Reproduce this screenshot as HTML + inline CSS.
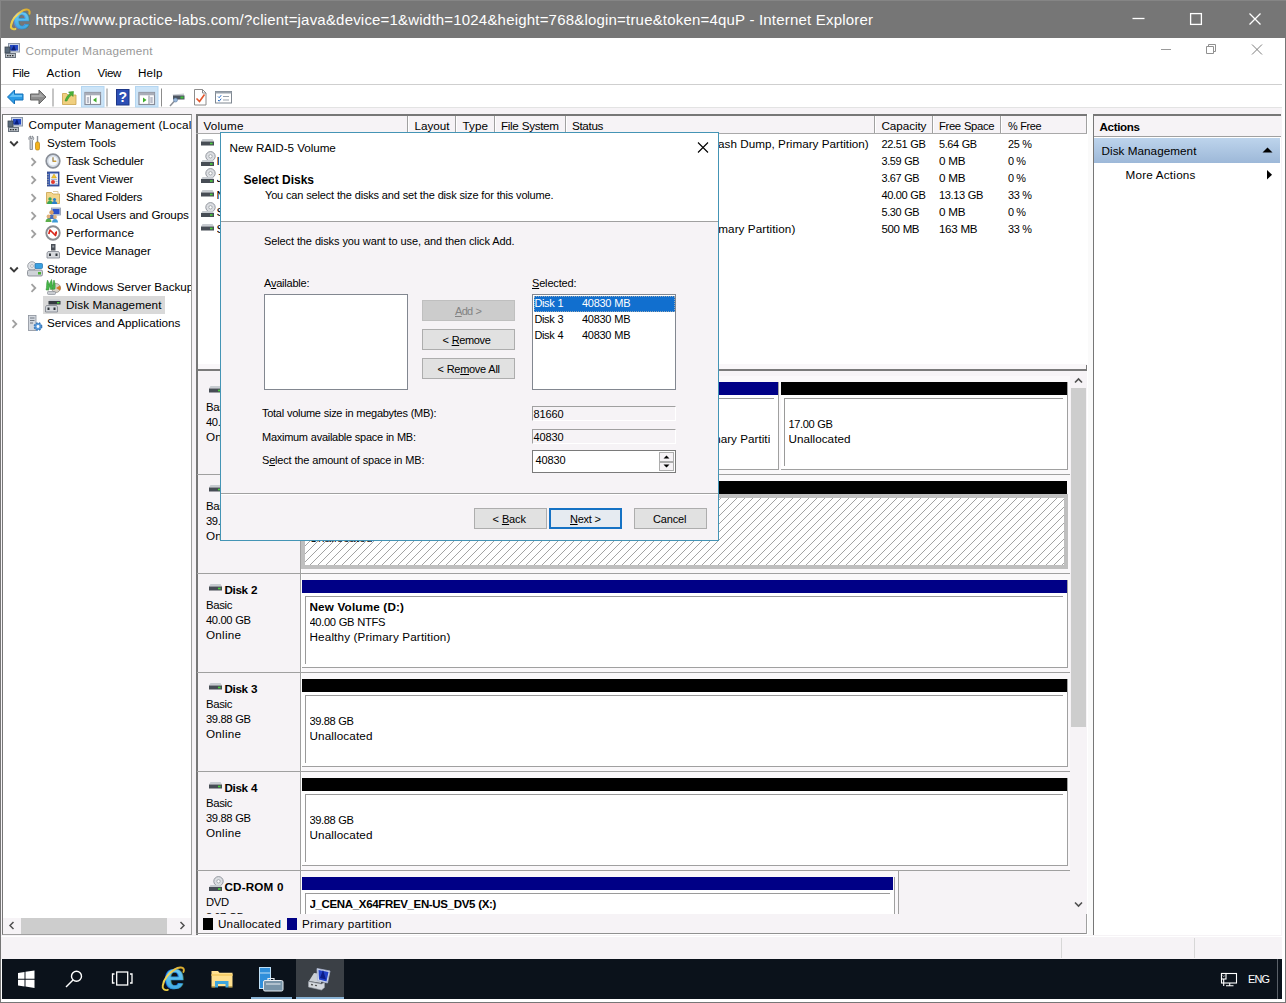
<!DOCTYPE html><html lang="en"><head><meta charset="utf-8"><title>Computer Management - New RAID-5 Volume</title>
<style>html,body{margin:0;padding:0}body{width:1286px;height:1003px;position:relative;overflow:hidden;background:#fff;font-family:"Liberation Sans", sans-serif;font-size:12px}div,span.t,svg{position:absolute}span.t{white-space:pre}u{text-decoration-thickness:1px;text-underline-offset:1px}svg{overflow:visible}</style></head><body>
<div style="left:0px;top:0px;width:1286px;height:1003px;background:#fff;"></div>
<div style="left:0px;top:0px;width:1286px;height:37.5px;background:#767676;"></div>
<div style="left:0px;top:37px;width:1px;height:966px;background:#767676;"></div>
<div style="left:0px;top:0px;width:1286px;height:1px;background:#858585;"></div>
<div style="left:0px;top:0px;width:1px;height:38px;background:#858585;"></div>
<div style="left:1285px;top:37px;width:1px;height:966px;background:#767676;"></div>
<div style="left:0px;top:1002px;width:1286px;height:1px;background:#767676;"></div>
<svg style="left:8px;top:6px" width="24" height="24" viewBox="0 0 24 24"><defs><linearGradient id="ieg8" x1="0" y1="0" x2="0" y2="1"><stop offset="0" stop-color="#86d3f6"/><stop offset=".55" stop-color="#58bdee"/><stop offset="1" stop-color="#2f97d8"/></linearGradient><linearGradient id="ier8" x1="0" y1="1" x2="1" y2="0"><stop offset="0" stop-color="#e7c83c"/><stop offset=".5" stop-color="#f3d864"/><stop offset="1" stop-color="#d9a92a"/></linearGradient></defs><text x="13.700" y="22.900" text-anchor="middle" font-family="Liberation Sans, sans-serif" font-weight="bold" font-size="30.500" fill="url(#ieg8)" stroke="#2a8fd2" stroke-width=".5">e</text><path d="M7.400 22.900C5 23.800 2.200 22.500 3 19.300 3.800 14.800 7.800 8.600 15 4.400 17.500 3.200 21 3 21.500 5.200 21.700 6.200 21.600 7 21.500 7.600" stroke="url(#ier8)" stroke-width="2.1" fill="none" stroke-linecap="round"/></svg>
<span class="t" style="left:35.5px;top:11.80px;font-size:15px;line-height:16px;color:#fff;letter-spacing:0.195px;">https://www.practice-labs.com/?client=java&amp;device=1&amp;width=1024&amp;height=768&amp;login=true&amp;token=4quP - Internet Explorer</span>
<svg style="left:1130px;top:8px" width="150" height="24" viewBox="0 0 150 24"><path d="M2.5 10.5h12" stroke="#fff" stroke-width="1.3" fill="none"/><rect x="60.6" y="5.6" width="10.8" height="10.8" stroke="#fff" stroke-width="1.3" fill="none"/><path d="M119.5 5.5l11 11M130.500 5.5l-11 11" stroke="#fff" stroke-width="1.3" fill="none"/></svg>
<div style="left:1px;top:108px;width:1281px;height:851px;background:#f6f3f6;"></div>
<svg style="left:4px;top:42px" width="17" height="17" viewBox="0 0 17 17"><rect x="4.500" y="1.500" width="11" height="8.500" fill="#c9d3e6" stroke="#8c97a8"/><rect x="6" y="3" width="8" height="5.500" fill="#2348c4"/><path d="M7 8.500l3-5.500 2 5.500z" fill="#0a1f7a"/><rect x="1" y="5" width="5" height="6" fill="#5a6a7a" stroke="#3c4650" stroke-width=".8"/><rect x="1.500" y="11.500" width="10" height="4" fill="#b9c0c8" stroke="#6a737d"/><rect x="3" y="13" width="1.500" height="1.300" fill="#333"/><rect x="5.500" y="13" width="1.500" height="1.300" fill="#333"/><rect x="8" y="13" width="1.500" height="1.300" fill="#333"/></svg>
<span class="t" style="left:25.6px;top:42.80px;font-size:11.7px;line-height:16px;color:#999;letter-spacing:0.232px;">Computer Management</span>
<svg style="left:1160px;top:40px" width="110" height="20" viewBox="0 0 110 20"><path d="M1 9.500h10" stroke="#9a9a9a" stroke-width="1" fill="none"/><path d="M46.500 6.500h7v7h-7zM48.500 6.500v-2h7v7h-2" stroke="#909090" stroke-width="1" fill="none"/><path d="M92 4.500l10 10M102 4.500l-10 10" stroke="#7d7d7d" stroke-width="1" fill="none"/></svg>
<span class="t" style="left:12.3px;top:65.20px;font-size:11.6px;line-height:16px;color:#000;letter-spacing:-0.333px;">File</span>
<span class="t" style="left:46.5px;top:65.20px;font-size:11.7px;line-height:16px;color:#000;letter-spacing:0.295px;">Action</span>
<span class="t" style="left:97.5px;top:65.20px;font-size:11.6px;line-height:16px;color:#000;letter-spacing:-0.312px;">View</span>
<span class="t" style="left:138px;top:65.20px;font-size:11.7px;line-height:16px;color:#000;letter-spacing:0.143px;">Help</span>
<div style="left:1px;top:84px;width:1281px;height:1px;background:#cfcfcf;"></div>
<div style="left:1px;top:107px;width:1281px;height:1px;background:#e3e3e3;"></div>
<svg style="left:1px;top:85px" width="240" height="23" viewBox="0 0 240 23"><path d="M6.500 12l7-7v4h8.500v6h-8.500v4z" fill="#2b9be6" stroke="#1470b8" stroke-width="1" stroke-linejoin="round"/><path d="M8.500 12l4.500-4.500v2.500h8v2z" fill="#7fd0fb" opacity=".7"/><path d="M45 12l-7-7v4h-8.500v6h8.500v4z" fill="#8d8d8d" stroke="#666" stroke-width="1" stroke-linejoin="round"/><path d="M43 12l-4.500-4.500v2.500h-8v2z" fill="#b5b5b5" opacity=".7"/><rect x="51.5" y="3.500" width="1" height="18" fill="#8c8c8c"/><rect x="105.5" y="3.500" width="1" height="18" fill="#8c8c8c"/><rect x="160" y="3.500" width="1" height="18" fill="#8c8c8c"/><path d="M61.500 8.500h4l1.500 1.500h8v9.500h-13.500z" fill="#f0cf7f" stroke="#c9a24b" stroke-width=".8"/><path d="M64 16c1-4 3-6 5-7.500l-1.500-1.500 5-.5-.5 5-1.500-1.500c-2 1.500-3.500 3.500-4.500 6z" fill="#4db33a" stroke="#2d8a23" stroke-width=".5"/><rect x="80.5" y="1.500" width="22.500" height="20.500" fill="#cce4f7" stroke="#b3d6f2" stroke-width="1"/><rect x="134.5" y="1.500" width="22.500" height="20.500" fill="#cce4f7" stroke="#b3d6f2" stroke-width="1"/><rect x="84" y="7.500" width="15.500" height="12" fill="#fff" stroke="#878c99" stroke-width="1.200"/><rect x="84" y="7.500" width="15.500" height="2.800" fill="#a9adb8"/><rect x="85.5" y="11.800" width="3" height="6.500" fill="#dfe2ea"/><path d="M89.5 10.500v9" stroke="#878c99" stroke-width="1"/><path d="M86 13h2M86 15h2M86 17h2" stroke="#878c99" stroke-width=".8"/><path d="M95.5 12.500v5l-3.500-2.500z" fill="#3fae2a"/><rect x="138" y="7.500" width="15.500" height="12" fill="#fff" stroke="#878c99" stroke-width="1.200"/><rect x="138" y="7.500" width="15.500" height="2.800" fill="#a9adb8"/><rect x="149" y="11.800" width="3" height="6.500" fill="#dfe2ea"/><path d="M148 10.500v9" stroke="#878c99" stroke-width="1"/><path d="M149.5 13h2M149.5 15h2M149.5 17h2" stroke="#878c99" stroke-width=".8"/><path d="M142 12.500v5l3.500-2.500z" fill="#3fae2a"/><rect x="115.500" y="4.500" width="12.500" height="15.500" fill="#2d4fb5" stroke="#1d3787" stroke-width="1"/><text x="121.800" y="17.300" text-anchor="middle" font-family="Liberation Sans, sans-serif" font-weight="bold" font-size="14" fill="#fff">?</text><path d="M169 21l4.500-5" stroke="#8a8f98" stroke-width="1.500"/><path d="M171.500 9.500l11.500-1v4.500l-9.500 2z" fill="#c9cdd3"/><rect x="172" y="10.500" width="11.500" height="4" fill="#4c5560"/><rect x="179.500" y="11.500" width="3" height="2" fill="#3ec43a"/><circle cx="174.500" cy="15" r="2" fill="#9ab7d9" stroke="#5c7fa8" stroke-width=".6"/><path d="M193.500 4.500h8l3.500 3.500v12h-11.500z" fill="#fff" stroke="#8c8c8c" stroke-width="1"/><path d="M201.500 4.500v3.500h3.500" fill="none" stroke="#8c8c8c" stroke-width="1"/><path d="M195.500 13.500l3 3 5-7" fill="none" stroke="#e3562b" stroke-width="1.600"/><rect x="214.500" y="6.500" width="16" height="11.500" fill="#fff" stroke="#7f8791" stroke-width="1"/><rect x="214.500" y="6.500" width="16" height="2" fill="#9aa3ad"/><path d="M217 11.500l1.200 1.200 2-2.500M217 15l1.200 1.200 2-2.500" fill="none" stroke="#2a6fc9" stroke-width="1"/><path d="M222 11.500h6M222 15h6" stroke="#9aa3ad" stroke-width="1"/></svg>
<div style="left:2px;top:114px;width:190px;height:821px;background:#fff;border:1px solid #a0a0a0;box-sizing:border-box;border-top-color:#777;border-left-color:#777;"></div>
<div style="left:4px;top:115px;width:187px;height:802px;overflow:hidden">
<svg style="left:3px;top:1.0999999999999943px" width="17" height="17" viewBox="0 0 17 17"><rect x="4.500" y="1.500" width="11" height="8.500" fill="#c9d3e6" stroke="#8c97a8"/><rect x="6" y="3" width="8" height="5.500" fill="#2348c4"/><path d="M7 8.500l3-5.500 2 5.500z" fill="#0a1f7a"/><rect x="1" y="5" width="5" height="6" fill="#5a6a7a" stroke="#3c4650" stroke-width=".8"/><rect x="1.500" y="11.500" width="10" height="4" fill="#b9c0c8" stroke="#6a737d"/><rect x="3" y="13" width="1.500" height="1.300" fill="#333"/><rect x="5.500" y="13" width="1.500" height="1.300" fill="#333"/><rect x="8" y="13" width="1.500" height="1.300" fill="#333"/></svg>
<span class="t" style="left:24.5px;top:1.60px;font-size:11.7px;line-height:16px;color:#000;letter-spacing:0.198px;white-space:nowrap;">Computer Management (Local)</span>
<svg style="left:23px;top:19.599999999999994px" width="16" height="16" viewBox="0 0 16 16"><path d="M3.500 1c-1.500.5-2 2-1.500 3.500l1 1v9h2.500v-9l1-1c.5-1.500 0-3-1.500-3.500v2.500h-1.500z" fill="#c9ccd1" stroke="#6f747b" stroke-width=".7"/><rect x="9.800" y="1" width="1.400" height="6" fill="#8c9097"/><rect x="8.500" y="7" width="4" height="8" rx="1.500" fill="#f3b21b" stroke="#b9810c" stroke-width=".7"/></svg>
<svg style="left:5.199999999999999px;top:24.799999999999994px" width="10" height="8" viewBox="0 0 10 8"><path d="M1.200 1.500l3.800 3.800 3.800-3.800" stroke="#3a3a3a" stroke-width="1.900" fill="none"/></svg>
<span class="t" style="left:43px;top:19.60px;font-size:11.7px;line-height:16px;color:#000;letter-spacing:-0.036px;word-spacing:0.036px;white-space:nowrap;">System Tools</span>
<svg style="left:41px;top:37.599999999999994px" width="16" height="16" viewBox="0 0 16 16"><circle cx="8" cy="8" r="6.800" fill="#dfe8f3" stroke="#8a8f98" stroke-width="1.700"/><circle cx="8" cy="8" r="5" fill="#f4f8fc" stroke="#c2c9d3" stroke-width=".6"/><path d="M8 4.300v4h3.200" fill="none" stroke="#8a6a2a" stroke-width="1.100"/><path d="M8.300 8.300h2.900" fill="none" stroke="#d8a530" stroke-width="1.100"/></svg>
<svg style="left:25.700000000000003px;top:42.199999999999996px" width="7" height="11" viewBox="0 0 7 11"><path d="M1.500 1.200l3.800 3.800-3.800 3.800" stroke="#a0a0a0" stroke-width="1.800" fill="none"/></svg>
<span class="t" style="left:62px;top:37.60px;font-size:11.7px;line-height:16px;color:#000;letter-spacing:-0.166px;word-spacing:0.166px;white-space:nowrap;">Task Scheduler</span>
<svg style="left:41px;top:55.599999999999994px" width="16" height="16" viewBox="0 0 16 16"><rect x="2.500" y="1" width="11.500" height="14" fill="#3e5fb3" stroke="#263f85" stroke-width=".8"/><rect x="5" y="2.500" width="8" height="11" fill="#eef1f7"/><path d="M2 3.500h2M2 6h2M2 8.500h2M2 11h2M2 13.500h2" stroke="#9aa0aa" stroke-width=".8"/><path d="M9 3l2.500 4h-5z" fill="#f4c52a" stroke="#b98d10" stroke-width=".4"/><circle cx="8" cy="11" r="2" fill="#e2392d"/><path d="M6 8.500h6M10.500 10.500h2M10.500 12.500h2" stroke="#7d8bb5" stroke-width=".6"/></svg>
<svg style="left:25.700000000000003px;top:60.199999999999996px" width="7" height="11" viewBox="0 0 7 11"><path d="M1.500 1.200l3.800 3.800-3.800 3.800" stroke="#a0a0a0" stroke-width="1.800" fill="none"/></svg>
<span class="t" style="left:62px;top:55.60px;font-size:11.7px;line-height:16px;color:#000;letter-spacing:-0.122px;word-spacing:0.122px;white-space:nowrap;">Event Viewer</span>
<svg style="left:41px;top:73.6px" width="16" height="16" viewBox="0 0 16 16"><path d="M1.500 3.500h5l1.500 1.500h6.500v9.500h-13z" fill="#f3d58b" stroke="#c9a24b" stroke-width=".8"/><path d="M8 2.500h5v2.500" fill="none" stroke="#d8c8a0" stroke-width="1"/><circle cx="5" cy="10" r="1.700" fill="#3aa657"/><path d="M2 15c0-2.500 1.500-3.300 3-3.300s3 .8 3 3.300z" fill="#3aa657"/><circle cx="9.500" cy="10.500" r="1.600" fill="#2a7fc9"/><path d="M6.800 15c0-2.300 1.300-3 2.700-3s2.700.7 2.700 3z" fill="#2a7fc9"/></svg>
<svg style="left:25.700000000000003px;top:78.19999999999999px" width="7" height="11" viewBox="0 0 7 11"><path d="M1.500 1.200l3.800 3.800-3.800 3.800" stroke="#a0a0a0" stroke-width="1.800" fill="none"/></svg>
<span class="t" style="left:62px;top:73.60px;font-size:11.7px;line-height:16px;color:#000;letter-spacing:-0.291px;word-spacing:0.291px;white-space:nowrap;">Shared Folders</span>
<svg style="left:41px;top:91.6px" width="16" height="16" viewBox="0 0 16 16"><rect x="6.500" y="1" width="9" height="7" fill="#c9d3e6" stroke="#8c97a8" stroke-width=".8"/><rect x="7.500" y="2" width="7" height="5" fill="#2d52c8"/><circle cx="6.500" cy="5.500" r="2.200" fill="#d9a066"/><path d="M2.500 12c0-3 2-4.200 4-4.200s4 1.200 4 4.200z" fill="#4a6fb8"/><circle cx="3.500" cy="9.500" r="1.900" fill="#e0b27c"/><path d="M.5 15c0-2.500 1.500-3.500 3-3.500s3 1 3 3.500z" fill="#5cae4a"/><circle cx="10" cy="10" r="1.900" fill="#e0b27c"/><path d="M7 15.500c0-2.500 1.500-3.500 3-3.500s3 1 3 3.500z" fill="#3f9bd8"/></svg>
<svg style="left:25.700000000000003px;top:96.19999999999999px" width="7" height="11" viewBox="0 0 7 11"><path d="M1.500 1.200l3.800 3.800-3.800 3.800" stroke="#a0a0a0" stroke-width="1.800" fill="none"/></svg>
<span class="t" style="left:62px;top:91.60px;font-size:11.7px;line-height:16px;color:#000;letter-spacing:-0.176px;word-spacing:0.176px;white-space:nowrap;">Local Users and Groups</span>
<svg style="left:41px;top:109.6px" width="16" height="16" viewBox="0 0 16 16"><circle cx="8" cy="8" r="6.700" fill="#fff" stroke="#8a8d92" stroke-width="1.900"/><path d="M3.800 9l1.200-4 5.500 5.500.8-3.500" fill="none" stroke="#d8271c" stroke-width="1.700" stroke-linejoin="round"/><path d="M11.800 5.800l.3 3.200-2.600-1z" fill="#d8271c"/></svg>
<svg style="left:25.700000000000003px;top:114.19999999999999px" width="7" height="11" viewBox="0 0 7 11"><path d="M1.500 1.200l3.800 3.800-3.800 3.800" stroke="#a0a0a0" stroke-width="1.800" fill="none"/></svg>
<span class="t" style="left:62px;top:109.60px;font-size:11.7px;line-height:16px;color:#000;letter-spacing:0.101px;white-space:nowrap;">Performance</span>
<svg style="left:41px;top:127.6px" width="16" height="16" viewBox="0 0 16 16"><rect x="6" y="1" width="4.500" height="6.500" fill="#4b5058"/><rect x="7.200" y="2.500" width="2" height="2" fill="#9aa0a8"/><path d="M3 8.500h10.500l1 1.500v5h-12.500v-5z" fill="#d5d8dc" stroke="#7c828a" stroke-width=".8"/><rect x="4" y="10.500" width="2" height="2.500" fill="#2f343a"/><rect x="10.500" y="10.500" width="2" height="2.500" fill="#2f343a"/></svg>
<span class="t" style="left:62px;top:127.60px;font-size:11.7px;line-height:16px;color:#000;letter-spacing:-0.016px;word-spacing:0.016px;white-space:nowrap;">Device Manager</span>
<svg style="left:23px;top:145.60000000000002px" width="16" height="16" viewBox="0 0 16 16"><circle cx="5" cy="5" r="4.300" fill="#dfe2e6" stroke="#8b9097" stroke-width=".8"/><circle cx="5" cy="5" r="1.400" fill="#fff" stroke="#8b9097" stroke-width=".6"/><rect x="8" y="2.500" width="7.500" height="5" rx="1" fill="#3aa0e0" stroke="#1d6fae" stroke-width=".7"/><rect x=".5" y="9" width="15" height="6" rx="1.500" fill="#cfd3d8" stroke="#7c828a" stroke-width=".8"/><rect x="11" y="11" width="3" height="2.500" fill="#4caf35"/></svg>
<svg style="left:5.199999999999999px;top:150.8px" width="10" height="8" viewBox="0 0 10 8"><path d="M1.200 1.500l3.800 3.800 3.800-3.800" stroke="#3a3a3a" stroke-width="1.900" fill="none"/></svg>
<span class="t" style="left:43px;top:145.60px;font-size:11.7px;line-height:16px;color:#000;letter-spacing:-0.163px;white-space:nowrap;">Storage</span>
<svg style="left:41px;top:163.60000000000002px" width="16" height="16" viewBox="0 0 16 16"><circle cx="11" cy="9" r="4.500" fill="#d9d2c8" stroke="#8b8680" stroke-width=".7"/><path d="M11 9l4-2.500a4.500 4.500 0 0 1 0 5z" fill="#d07a2a"/><path d="M2 14l1-4 2 0z" fill="#ddd"/><rect x="2.500" y="12.500" width="8" height="3" rx="1" fill="#c9ccd1" stroke="#7c828a" stroke-width=".6"/><path d="M1 11c1-3 0-6 1.500-10 1 2 1.500 3 1.500 5 .5-2 1.500-3 2.500-5.500 1 3 .5 6 1 9.500l-2 .5-.8-4-1 4.500z" fill="#47b84a" stroke="#2c8a2f" stroke-width=".5"/><path d="M7.500 10.500c.5-3 0-6 1.500-9.500 1 2.500 1.500 5 1 9z" fill="#47b84a" stroke="#2c8a2f" stroke-width=".5"/></svg>
<svg style="left:25.700000000000003px;top:168.20000000000002px" width="7" height="11" viewBox="0 0 7 11"><path d="M1.500 1.200l3.800 3.800-3.800 3.800" stroke="#a0a0a0" stroke-width="1.800" fill="none"/></svg>
<span class="t" style="left:62px;top:163.60px;font-size:11.7px;line-height:16px;color:#000;white-space:nowrap;">Windows Server Backup</span>
<div style="left:39px;top:180.60000000000002px;width:122px;height:18px;background:#d9d9d9;"></div>
<svg style="left:41px;top:181.60000000000002px" width="16" height="16" viewBox="0 0 16 16"><path d="M4.500 2.500h10l1 2h-12z" fill="#c8ccd1"/><rect x="3.500" y="4" width="12" height="3.500" fill="#353a41"/><rect x="12" y="5" width="2.500" height="1.500" fill="#49d13d"/><path d="M1.500 8.500h10l1 1.500v5h-12v-5z" fill="#d5d8dc" stroke="#7c828a" stroke-width=".8"/><rect x="2.500" y="10.500" width="2" height="2.500" fill="#2f343a"/><rect x="8.500" y="10.500" width="2" height="2.500" fill="#2f343a"/></svg>
<span class="t" style="left:62px;top:181.60px;font-size:11.7px;line-height:16px;color:#000;letter-spacing:0.086px;white-space:nowrap;">Disk Management</span>
<svg style="left:23px;top:199.60000000000002px" width="16" height="16" viewBox="0 0 16 16"><rect x="1.500" y=".500" width="7.500" height="15" fill="#d3d8df" stroke="#8a919b" stroke-width=".8"/><path d="M3 3h4.500M3 5.500h4.500M3 8h3" stroke="#6f7781" stroke-width="1"/><circle cx="11" cy="11.500" r="3.600" fill="#5a9bdc" stroke="#3a78b8" stroke-width="1.600" stroke-dasharray="1.600 1.300"/><circle cx="11" cy="11.500" r="1.400" fill="#fff"/></svg>
<svg style="left:7.199999999999999px;top:204.20000000000002px" width="7" height="11" viewBox="0 0 7 11"><path d="M1.500 1.200l3.800 3.800-3.800 3.800" stroke="#a0a0a0" stroke-width="1.800" fill="none"/></svg>
<span class="t" style="left:43px;top:199.60px;font-size:11.7px;line-height:16px;color:#000;letter-spacing:0.007px;white-space:nowrap;">Services and Applications</span>
</div>
<div style="left:3px;top:917.5px;width:188px;height:16.5px;background:#f6f3f6;"></div>
<div style="left:21px;top:917.5px;width:146px;height:16.5px;background:#cdcdcd;"></div>
<svg style="left:4px;top:917px" width="187" height="17" viewBox="0 0 187 17"><path d="M9.500 5l-3.500 3.500 3.500 3.500" stroke="#505050" stroke-width="1.5" fill="none"/><path d="M176.500 5l3.500 3.500-3.500 3.500" stroke="#505050" stroke-width="1.500" fill="none"/></svg>
<div style="left:196px;top:114px;width:892px;height:821px;background:#fff;"></div>
<div style="left:196px;top:114px;width:891px;height:20px;background:#f6f3f6;"></div>
<div style="left:196px;top:114px;width:891px;height:1.5px;background:#777;"></div>
<div style="left:196px;top:114px;width:1.5px;height:821px;background:#777;"></div>
<div style="left:196px;top:133px;width:891px;height:1px;background:#a9a9a9;"></div>
<span class="t" style="left:203.5px;top:117.80px;font-size:11.7px;line-height:16px;color:#000;letter-spacing:0.194px;">Volume</span>
<div style="left:407px;top:116px;width:1px;height:17px;background:#a0a0a0;"></div>
<div style="left:408px;top:116px;width:1px;height:17px;background:#fff;"></div>
<span class="t" style="left:414.5px;top:117.80px;font-size:11.7px;line-height:16px;color:#000;letter-spacing:-0.026px;">Layout</span>
<div style="left:455px;top:116px;width:1px;height:17px;background:#a0a0a0;"></div>
<div style="left:456px;top:116px;width:1px;height:17px;background:#fff;"></div>
<span class="t" style="left:462.5px;top:117.80px;font-size:11.7px;line-height:16px;color:#000;letter-spacing:0.045px;">Type</span>
<div style="left:494px;top:116px;width:1px;height:17px;background:#a0a0a0;"></div>
<div style="left:495px;top:116px;width:1px;height:17px;background:#fff;"></div>
<span class="t" style="left:501px;top:117.80px;font-size:11.7px;line-height:16px;color:#000;letter-spacing:-0.347px;word-spacing:0.347px;">File System</span>
<div style="left:565px;top:116px;width:1px;height:17px;background:#a0a0a0;"></div>
<div style="left:566px;top:116px;width:1px;height:17px;background:#fff;"></div>
<span class="t" style="left:572px;top:117.80px;font-size:11.7px;line-height:16px;color:#000;letter-spacing:-0.336px;">Status</span>
<div style="left:874px;top:116px;width:1px;height:17px;background:#a0a0a0;"></div>
<div style="left:875px;top:116px;width:1px;height:17px;background:#fff;"></div>
<span class="t" style="left:881.5px;top:117.80px;font-size:11.7px;line-height:16px;color:#000;letter-spacing:-0.074px;">Capacity</span>
<div style="left:932px;top:116px;width:1px;height:17px;background:#a0a0a0;"></div>
<div style="left:933px;top:116px;width:1px;height:17px;background:#fff;"></div>
<span class="t" style="left:939px;top:117.80px;font-size:11.3px;line-height:16px;color:#000;letter-spacing:-0.366px;word-spacing:0.366px;">Free Space</span>
<div style="left:1000px;top:116px;width:1px;height:17px;background:#a0a0a0;"></div>
<div style="left:1001px;top:116px;width:1px;height:17px;background:#fff;"></div>
<span class="t" style="left:1008px;top:117.80px;font-size:10.9px;line-height:16px;color:#000;letter-spacing:-0.410px;word-spacing:0.410px;">% Free</span>
<div style="left:1086px;top:116px;width:1px;height:17px;background:#a0a0a0;"></div>
<div style="left:1087px;top:116px;width:1px;height:17px;background:#fff;"></div>
<svg style="left:199.5px;top:134.29999999999998px" width="16" height="16" viewBox="0 0 16 16"><g transform="translate(1,5) scale(1.0)"><path d="M1.500 0h10l1.500 2.500h-13z" fill="#c8ccd1"/><rect x="0" y="2.500" width="13" height="4" fill="#474d55"/><rect x="9" y="3.700" width="2.600" height="1.600" fill="#49d13d"/></g></svg>
<span class="t" style="left:221px;top:135.60px;font-size:11.7px;line-height:16px;color:#000;width:188px;overflow:hidden;white-space:nowrap;"> (C:)</span>
<span class="t" style="left:414.5px;top:135.60px;font-size:11.7px;line-height:16px;color:#000;">Simple</span>
<span class="t" style="left:462.5px;top:135.60px;font-size:11.7px;line-height:16px;color:#000;">Basic</span>
<span class="t" style="left:501px;top:135.60px;font-size:11.7px;line-height:16px;color:#000;">NTFS</span>
<span class="t" style="left:572px;top:135.60px;font-size:11.7px;line-height:16px;color:#000;letter-spacing:0.021px;white-space:nowrap;">Healthy (Boot, Page File, Crash Dump, Primary Partition)</span>
<span class="t" style="left:881.5px;top:135.60px;font-size:11.1px;line-height:16px;color:#000;letter-spacing:-0.400px;word-spacing:0.400px;">22.51 GB</span>
<span class="t" style="left:939px;top:135.60px;font-size:10.9px;line-height:16px;color:#000;letter-spacing:-0.399px;word-spacing:0.399px;">5.64 GB</span>
<span class="t" style="left:1008px;top:135.60px;font-size:10.9px;line-height:16px;color:#000;letter-spacing:-0.426px;word-spacing:0.426px;">25 %</span>
<svg style="left:199.5px;top:151.29999999999998px" width="16" height="16" viewBox="0 0 16 16"><g transform="translate(1,0)"><circle cx="9.500" cy="5.300" r="4.700" fill="#dcdee2" stroke="#8b9097" stroke-width=".9"/><circle cx="9.500" cy="5.300" r="1.700" fill="#fff" stroke="#8b9097" stroke-width=".7"/><path d="M1.500 9h10l1.500 2.500h-13z" fill="#c8ccd1"/><rect x="0" y="11" width="13" height="4" fill="#474d55"/><rect x="9" y="12.200" width="2.600" height="1.600" fill="#49d13d"/></g></svg>
<span class="t" style="left:216.5px;top:152.60px;font-size:11.7px;line-height:16px;color:#000;width:188px;overflow:hidden;white-space:nowrap;">IR3_SSS_X64FREE_EN-US_DV9 (E:)</span>
<span class="t" style="left:414.5px;top:152.60px;font-size:11.7px;line-height:16px;color:#000;">Simple</span>
<span class="t" style="left:462.5px;top:152.60px;font-size:11.7px;line-height:16px;color:#000;">Basic</span>
<span class="t" style="left:501px;top:152.60px;font-size:11.7px;line-height:16px;color:#000;">UDF</span>
<span class="t" style="left:572px;top:152.60px;font-size:11.7px;line-height:16px;color:#000;letter-spacing:0.339px;white-space:nowrap;">Healthy (Primary Partition)</span>
<span class="t" style="left:881.5px;top:152.60px;font-size:10.9px;line-height:16px;color:#000;letter-spacing:-0.399px;word-spacing:0.399px;">3.59 GB</span>
<span class="t" style="left:939px;top:152.60px;font-size:11.7px;line-height:16px;color:#000;letter-spacing:-0.408px;word-spacing:0.408px;">0 MB</span>
<span class="t" style="left:1008px;top:152.60px;font-size:10.9px;line-height:16px;color:#000;letter-spacing:-0.791px;word-spacing:0.791px;">0 %</span>
<svg style="left:199.5px;top:168.29999999999998px" width="16" height="16" viewBox="0 0 16 16"><g transform="translate(1,0)"><circle cx="9.500" cy="5.300" r="4.700" fill="#dcdee2" stroke="#8b9097" stroke-width=".9"/><circle cx="9.500" cy="5.300" r="1.700" fill="#fff" stroke="#8b9097" stroke-width=".7"/><path d="M1.500 9h10l1.500 2.500h-13z" fill="#c8ccd1"/><rect x="0" y="11" width="13" height="4" fill="#474d55"/><rect x="9" y="12.200" width="2.600" height="1.600" fill="#49d13d"/></g></svg>
<span class="t" style="left:216.5px;top:169.60px;font-size:11.7px;line-height:16px;color:#000;width:188px;overflow:hidden;white-space:nowrap;">J_CENA_X64FREV_EN-US_DV5 (X:)</span>
<span class="t" style="left:414.5px;top:169.60px;font-size:11.7px;line-height:16px;color:#000;">Simple</span>
<span class="t" style="left:462.5px;top:169.60px;font-size:11.7px;line-height:16px;color:#000;">Basic</span>
<span class="t" style="left:501px;top:169.60px;font-size:11.7px;line-height:16px;color:#000;">UDF</span>
<span class="t" style="left:572px;top:169.60px;font-size:11.7px;line-height:16px;color:#000;letter-spacing:0.339px;white-space:nowrap;">Healthy (Primary Partition)</span>
<span class="t" style="left:881.5px;top:169.60px;font-size:10.9px;line-height:16px;color:#000;letter-spacing:-0.399px;word-spacing:0.399px;">3.67 GB</span>
<span class="t" style="left:939px;top:169.60px;font-size:11.7px;line-height:16px;color:#000;letter-spacing:-0.408px;word-spacing:0.408px;">0 MB</span>
<span class="t" style="left:1008px;top:169.60px;font-size:10.9px;line-height:16px;color:#000;letter-spacing:-0.791px;word-spacing:0.791px;">0 %</span>
<svg style="left:199.5px;top:185.29999999999998px" width="16" height="16" viewBox="0 0 16 16"><g transform="translate(1,5) scale(1.0)"><path d="M1.500 0h10l1.500 2.500h-13z" fill="#c8ccd1"/><rect x="0" y="2.500" width="13" height="4" fill="#474d55"/><rect x="9" y="3.700" width="2.600" height="1.600" fill="#49d13d"/></g></svg>
<span class="t" style="left:216.5px;top:186.60px;font-size:11.7px;line-height:16px;color:#000;width:188px;overflow:hidden;white-space:nowrap;">New Volume (D:)</span>
<span class="t" style="left:414.5px;top:186.60px;font-size:11.7px;line-height:16px;color:#000;">Simple</span>
<span class="t" style="left:462.5px;top:186.60px;font-size:11.7px;line-height:16px;color:#000;">Basic</span>
<span class="t" style="left:501px;top:186.60px;font-size:11.7px;line-height:16px;color:#000;">NTFS</span>
<span class="t" style="left:572px;top:186.60px;font-size:11.7px;line-height:16px;color:#000;letter-spacing:0.339px;white-space:nowrap;">Healthy (Primary Partition)</span>
<span class="t" style="left:881.5px;top:186.60px;font-size:11.1px;line-height:16px;color:#000;letter-spacing:-0.400px;word-spacing:0.400px;">40.00 GB</span>
<span class="t" style="left:939px;top:186.60px;font-size:11.1px;line-height:16px;color:#000;letter-spacing:-0.400px;word-spacing:0.400px;">13.13 GB</span>
<span class="t" style="left:1008px;top:186.60px;font-size:10.9px;line-height:16px;color:#000;letter-spacing:-0.426px;word-spacing:0.426px;">33 %</span>
<svg style="left:199.5px;top:202.29999999999998px" width="16" height="16" viewBox="0 0 16 16"><g transform="translate(1,0)"><circle cx="9.500" cy="5.300" r="4.700" fill="#dcdee2" stroke="#8b9097" stroke-width=".9"/><circle cx="9.500" cy="5.300" r="1.700" fill="#fff" stroke="#8b9097" stroke-width=".7"/><path d="M1.500 9h10l1.500 2.500h-13z" fill="#c8ccd1"/><rect x="0" y="11" width="13" height="4" fill="#474d55"/><rect x="9" y="12.200" width="2.600" height="1.600" fill="#49d13d"/></g></svg>
<span class="t" style="left:216.5px;top:203.60px;font-size:11.7px;line-height:16px;color:#000;width:188px;overflow:hidden;white-space:nowrap;">SSS_X64FRE_EN-US_DV9 (F:)</span>
<span class="t" style="left:414.5px;top:203.60px;font-size:11.7px;line-height:16px;color:#000;">Simple</span>
<span class="t" style="left:462.5px;top:203.60px;font-size:11.7px;line-height:16px;color:#000;">Basic</span>
<span class="t" style="left:501px;top:203.60px;font-size:11.7px;line-height:16px;color:#000;">UDF</span>
<span class="t" style="left:572px;top:203.60px;font-size:11.7px;line-height:16px;color:#000;letter-spacing:0.339px;white-space:nowrap;">Healthy (Primary Partition)</span>
<span class="t" style="left:881.5px;top:203.60px;font-size:10.9px;line-height:16px;color:#000;letter-spacing:-0.399px;word-spacing:0.399px;">5.30 GB</span>
<span class="t" style="left:939px;top:203.60px;font-size:11.7px;line-height:16px;color:#000;letter-spacing:-0.408px;word-spacing:0.408px;">0 MB</span>
<span class="t" style="left:1008px;top:203.60px;font-size:10.9px;line-height:16px;color:#000;letter-spacing:-0.791px;word-spacing:0.791px;">0 %</span>
<svg style="left:199.5px;top:219.29999999999998px" width="16" height="16" viewBox="0 0 16 16"><g transform="translate(1,5) scale(1.0)"><path d="M1.500 0h10l1.500 2.500h-13z" fill="#c8ccd1"/><rect x="0" y="2.500" width="13" height="4" fill="#474d55"/><rect x="9" y="3.700" width="2.600" height="1.600" fill="#49d13d"/></g></svg>
<span class="t" style="left:216.5px;top:220.60px;font-size:11.7px;line-height:16px;color:#000;width:188px;overflow:hidden;white-space:nowrap;">System Reserved</span>
<span class="t" style="left:414.5px;top:220.60px;font-size:11.7px;line-height:16px;color:#000;">Simple</span>
<span class="t" style="left:462.5px;top:220.60px;font-size:11.7px;line-height:16px;color:#000;">Basic</span>
<span class="t" style="left:501px;top:220.60px;font-size:11.7px;line-height:16px;color:#000;">NTFS</span>
<span class="t" style="left:572px;top:220.60px;font-size:11.7px;line-height:16px;color:#000;letter-spacing:0.074px;white-space:nowrap;">Healthy (System, Active, Primary Partition)</span>
<span class="t" style="left:881.5px;top:220.60px;font-size:11.5px;line-height:16px;color:#000;letter-spacing:-0.409px;word-spacing:0.409px;">500 MB</span>
<span class="t" style="left:939px;top:220.60px;font-size:11.6px;line-height:16px;color:#000;letter-spacing:-0.370px;word-spacing:0.370px;">163 MB</span>
<span class="t" style="left:1008px;top:220.60px;font-size:10.9px;line-height:16px;color:#000;letter-spacing:-0.426px;word-spacing:0.426px;">33 %</span>
<div style="left:197.5px;top:363.5px;width:889.5px;height:5.5px;background:#f9f7f9;"></div>
<div style="left:197.5px;top:369px;width:889.5px;height:1.5px;background:#7a7a7a;"></div>
<div style="left:1086px;top:365px;width:1px;height:5px;background:#7a7a7a;"></div>
<div style="left:197.5px;top:370.5px;width:889.5px;height:563.5px;background:#f6f3f6;"></div>
<div style="left:197px;top:376px;width:873px;height:99px;overflow:hidden">
<div style="left:0px;top:98px;width:873px;height:1px;background:#a0a0a0;"></div>
<div style="left:103px;top:0px;width:1px;height:98px;background:#a0a0a0;"></div>
<div style="left:104px;top:0px;width:1px;height:98px;background:#fff;"></div>
<div style="left:105px;top:0px;width:767.5px;height:98px;background:#faf8fa;"></div>
<svg style="left:11px;top:9.5px" width="16" height="16" viewBox="0 0 16 16"><g transform="translate(1,0) scale(1.0)"><path d="M1.500 0h10l1.500 2.500h-13z" fill="#c8ccd1"/><rect x="0" y="2.500" width="13" height="4" fill="#474d55"/><rect x="9" y="3.700" width="2.600" height="1.600" fill="#49d13d"/></g></svg>
<span class="t" style="left:27.5px;top:8.00px;font-size:11.7px;line-height:16px;color:#000;font-weight:bold;letter-spacing:-0.369px;word-spacing:0.369px;white-space:nowrap;">Disk 0</span>
<span class="t" style="left:9px;top:23.20px;font-size:11.4px;line-height:16px;color:#000;letter-spacing:-0.344px;white-space:nowrap;">Basic</span>
<span class="t" style="left:9px;top:38.20px;font-size:11.2px;line-height:16px;color:#000;letter-spacing:-0.387px;word-spacing:0.387px;white-space:nowrap;">40.00 GB</span>
<span class="t" style="left:9px;top:53.20px;font-size:11.7px;line-height:16px;color:#000;letter-spacing:0.236px;white-space:nowrap;">Online</span>
<div style="left:105px;top:6px;width:177.5px;height:12.7px;background:#000086;"></div>
<div style="left:105px;top:18.7px;width:178px;height:74.3px;background:#fff;"></div>
<div style="left:108px;top:22px;width:171px;height:1px;background:#9a9a9a;"></div>
<div style="left:108px;top:22px;width:1px;height:68px;background:#9a9a9a;"></div>
<div style="left:283px;top:6px;width:1px;height:88px;background:#a0a0a0;"></div>
<div style="left:105px;top:93px;width:179px;height:1px;background:#a0a0a0;"></div>
<span class="t" style="left:112.5px;top:24.50px;font-size:11.7px;line-height:16px;color:#000;font-weight:bold;width:168px;overflow:hidden;white-space:nowrap;">System Reserved</span>
<span class="t" style="left:112.5px;top:39.50px;font-size:11.7px;line-height:16px;color:#000;width:168px;overflow:hidden;white-space:nowrap;">500 MB NTFS</span>
<span class="t" style="left:112.5px;top:54.50px;font-size:11.7px;line-height:16px;color:#000;width:168px;overflow:hidden;white-space:nowrap;">Healthy (System, Active, Primary Partition)</span>
<div style="left:286px;top:6px;width:294.5px;height:12.7px;background:#000086;"></div>
<div style="left:286px;top:18.7px;width:295px;height:74.3px;background:#fff;"></div>
<div style="left:289px;top:22px;width:288px;height:1px;background:#9a9a9a;"></div>
<div style="left:289px;top:22px;width:1px;height:68px;background:#9a9a9a;"></div>
<div style="left:581px;top:6px;width:1px;height:88px;background:#a0a0a0;"></div>
<div style="left:286px;top:93px;width:296px;height:1px;background:#a0a0a0;"></div>
<span class="t" style="left:293.5px;top:24.70px;font-size:11.7px;line-height:16px;color:#000;font-weight:bold;width:279px;overflow:hidden;white-space:nowrap;"> (C:)</span>
<span class="t" style="left:293.5px;top:39.70px;font-size:11.7px;line-height:16px;color:#000;width:279px;overflow:hidden;white-space:nowrap;">22.51 GB NTFS</span>
<span class="t" style="left:293.5px;top:54.70px;font-size:11.7px;line-height:16px;color:#000;letter-spacing:0.021px;width:279px;overflow:hidden;white-space:nowrap;">Healthy (Boot, Page File, Crash Dump, Primary Partition)</span>
<div style="left:584px;top:6px;width:285.5px;height:12.7px;background:#000;"></div>
<div style="left:584px;top:18.7px;width:286px;height:74.3px;background:#fff;"></div>
<div style="left:587px;top:22px;width:279px;height:1px;background:#9a9a9a;"></div>
<div style="left:587px;top:22px;width:1px;height:68px;background:#9a9a9a;"></div>
<div style="left:870px;top:6px;width:1px;height:88px;background:#a0a0a0;"></div>
<div style="left:584px;top:93px;width:287px;height:1px;background:#a0a0a0;"></div>
<span class="t" style="left:591.5px;top:39.70px;font-size:11.1px;line-height:16px;color:#000;letter-spacing:-0.400px;word-spacing:0.400px;width:276px;overflow:hidden;white-space:nowrap;">17.00 GB</span>
<span class="t" style="left:591.5px;top:54.70px;font-size:11.7px;line-height:16px;color:#000;letter-spacing:0.021px;width:276px;overflow:hidden;white-space:nowrap;">Unallocated</span>
</div>
<div style="left:197px;top:475px;width:873px;height:99px;overflow:hidden">
<div style="left:0px;top:98px;width:873px;height:1px;background:#a0a0a0;"></div>
<div style="left:103px;top:0px;width:1px;height:98px;background:#a0a0a0;"></div>
<div style="left:104px;top:0px;width:1px;height:98px;background:#fff;"></div>
<div style="left:105px;top:0px;width:767.5px;height:98px;background:#faf8fa;"></div>
<svg style="left:11px;top:9.5px" width="16" height="16" viewBox="0 0 16 16"><g transform="translate(1,0) scale(1.0)"><path d="M1.500 0h10l1.500 2.500h-13z" fill="#c8ccd1"/><rect x="0" y="2.500" width="13" height="4" fill="#474d55"/><rect x="9" y="3.700" width="2.600" height="1.600" fill="#49d13d"/></g></svg>
<span class="t" style="left:27.5px;top:8.00px;font-size:11.7px;line-height:16px;color:#000;font-weight:bold;letter-spacing:-0.369px;word-spacing:0.369px;white-space:nowrap;">Disk 1</span>
<span class="t" style="left:9px;top:23.20px;font-size:11.4px;line-height:16px;color:#000;letter-spacing:-0.344px;white-space:nowrap;">Basic</span>
<span class="t" style="left:9px;top:38.20px;font-size:11.2px;line-height:16px;color:#000;letter-spacing:-0.387px;word-spacing:0.387px;white-space:nowrap;">39.88 GB</span>
<span class="t" style="left:9px;top:53.20px;font-size:11.7px;line-height:16px;color:#000;letter-spacing:0.236px;white-space:nowrap;">Online</span>
<div style="left:105px;top:6px;width:764.5px;height:12.7px;background:#000;"></div>
<div style="left:104px;top:18.700px;width:767px;height:75.300px;box-sizing:border-box;border:4px solid #bfbfbf;background:#fff repeating-linear-gradient(135deg,transparent 0,transparent 5px,#a3a3a3 5px,#a3a3a3 5.660px)"></div>
<span class="t" style="left:112.5px;top:39.70px;font-size:11.1px;line-height:16px;color:#000;letter-spacing:-0.400px;word-spacing:0.400px;width:755px;overflow:hidden;white-space:nowrap;">39.88 GB</span>
<span class="t" style="left:112.5px;top:54.70px;font-size:11.7px;line-height:16px;color:#000;letter-spacing:0.121px;width:755px;overflow:hidden;white-space:nowrap;">Unallocated</span>
</div>
<div style="left:197px;top:574px;width:873px;height:99px;overflow:hidden">
<div style="left:0px;top:98px;width:873px;height:1px;background:#a0a0a0;"></div>
<div style="left:103px;top:0px;width:1px;height:98px;background:#a0a0a0;"></div>
<div style="left:104px;top:0px;width:1px;height:98px;background:#fff;"></div>
<div style="left:105px;top:0px;width:767.5px;height:98px;background:#faf8fa;"></div>
<svg style="left:11px;top:9.5px" width="16" height="16" viewBox="0 0 16 16"><g transform="translate(1,0) scale(1.0)"><path d="M1.500 0h10l1.500 2.500h-13z" fill="#c8ccd1"/><rect x="0" y="2.500" width="13" height="4" fill="#474d55"/><rect x="9" y="3.700" width="2.600" height="1.600" fill="#49d13d"/></g></svg>
<span class="t" style="left:27.5px;top:8.00px;font-size:11.7px;line-height:16px;color:#000;font-weight:bold;letter-spacing:-0.369px;word-spacing:0.369px;white-space:nowrap;">Disk 2</span>
<span class="t" style="left:9px;top:23.20px;font-size:11.4px;line-height:16px;color:#000;letter-spacing:-0.344px;white-space:nowrap;">Basic</span>
<span class="t" style="left:9px;top:38.20px;font-size:11.2px;line-height:16px;color:#000;letter-spacing:-0.387px;word-spacing:0.387px;white-space:nowrap;">40.00 GB</span>
<span class="t" style="left:9px;top:53.20px;font-size:11.7px;line-height:16px;color:#000;letter-spacing:0.236px;white-space:nowrap;">Online</span>
<div style="left:105px;top:6px;width:764.5px;height:12.7px;background:#000086;"></div>
<div style="left:105px;top:18.7px;width:765px;height:74.3px;background:#fff;"></div>
<div style="left:108px;top:22px;width:758px;height:1px;background:#9a9a9a;"></div>
<div style="left:108px;top:22px;width:1px;height:68px;background:#9a9a9a;"></div>
<div style="left:870px;top:6px;width:1px;height:88px;background:#a0a0a0;"></div>
<div style="left:105px;top:93px;width:766px;height:1px;background:#a0a0a0;"></div>
<span class="t" style="left:112.5px;top:24.70px;font-size:11.7px;line-height:16px;color:#000;font-weight:bold;letter-spacing:0.178px;width:755px;overflow:hidden;white-space:nowrap;">New Volume  (D:)</span>
<span class="t" style="left:112.5px;top:39.70px;font-size:11.2px;line-height:16px;color:#000;letter-spacing:-0.368px;word-spacing:0.368px;width:755px;overflow:hidden;white-space:nowrap;">40.00 GB NTFS</span>
<span class="t" style="left:112.5px;top:54.70px;font-size:11.7px;line-height:16px;color:#000;letter-spacing:0.147px;width:755px;overflow:hidden;white-space:nowrap;">Healthy (Primary Partition)</span>
</div>
<div style="left:197px;top:673px;width:873px;height:99px;overflow:hidden">
<div style="left:0px;top:98px;width:873px;height:1px;background:#a0a0a0;"></div>
<div style="left:103px;top:0px;width:1px;height:98px;background:#a0a0a0;"></div>
<div style="left:104px;top:0px;width:1px;height:98px;background:#fff;"></div>
<div style="left:105px;top:0px;width:767.5px;height:98px;background:#faf8fa;"></div>
<svg style="left:11px;top:9.5px" width="16" height="16" viewBox="0 0 16 16"><g transform="translate(1,0) scale(1.0)"><path d="M1.500 0h10l1.500 2.500h-13z" fill="#c8ccd1"/><rect x="0" y="2.500" width="13" height="4" fill="#474d55"/><rect x="9" y="3.700" width="2.600" height="1.600" fill="#49d13d"/></g></svg>
<span class="t" style="left:27.5px;top:8.00px;font-size:11.7px;line-height:16px;color:#000;font-weight:bold;letter-spacing:-0.369px;word-spacing:0.369px;white-space:nowrap;">Disk 3</span>
<span class="t" style="left:9px;top:23.20px;font-size:11.4px;line-height:16px;color:#000;letter-spacing:-0.344px;white-space:nowrap;">Basic</span>
<span class="t" style="left:9px;top:38.20px;font-size:11.2px;line-height:16px;color:#000;letter-spacing:-0.387px;word-spacing:0.387px;white-space:nowrap;">39.88 GB</span>
<span class="t" style="left:9px;top:53.20px;font-size:11.7px;line-height:16px;color:#000;letter-spacing:0.236px;white-space:nowrap;">Online</span>
<div style="left:105px;top:6px;width:764.5px;height:12.7px;background:#000;"></div>
<div style="left:105px;top:18.7px;width:765px;height:74.3px;background:#fff;"></div>
<div style="left:108px;top:22px;width:758px;height:1px;background:#9a9a9a;"></div>
<div style="left:108px;top:22px;width:1px;height:68px;background:#9a9a9a;"></div>
<div style="left:870px;top:6px;width:1px;height:88px;background:#a0a0a0;"></div>
<div style="left:105px;top:93px;width:766px;height:1px;background:#a0a0a0;"></div>
<span class="t" style="left:112.5px;top:39.70px;font-size:11.1px;line-height:16px;color:#000;letter-spacing:-0.400px;word-spacing:0.400px;width:755px;overflow:hidden;white-space:nowrap;">39.88 GB</span>
<span class="t" style="left:112.5px;top:54.70px;font-size:11.7px;line-height:16px;color:#000;letter-spacing:0.121px;width:755px;overflow:hidden;white-space:nowrap;">Unallocated</span>
</div>
<div style="left:197px;top:772px;width:873px;height:99px;overflow:hidden">
<div style="left:0px;top:98px;width:873px;height:1px;background:#a0a0a0;"></div>
<div style="left:103px;top:0px;width:1px;height:98px;background:#a0a0a0;"></div>
<div style="left:104px;top:0px;width:1px;height:98px;background:#fff;"></div>
<div style="left:105px;top:0px;width:767.5px;height:98px;background:#faf8fa;"></div>
<svg style="left:11px;top:9.5px" width="16" height="16" viewBox="0 0 16 16"><g transform="translate(1,0) scale(1.0)"><path d="M1.500 0h10l1.500 2.500h-13z" fill="#c8ccd1"/><rect x="0" y="2.500" width="13" height="4" fill="#474d55"/><rect x="9" y="3.700" width="2.600" height="1.600" fill="#49d13d"/></g></svg>
<span class="t" style="left:27.5px;top:8.00px;font-size:11.7px;line-height:16px;color:#000;font-weight:bold;letter-spacing:-0.369px;word-spacing:0.369px;white-space:nowrap;">Disk 4</span>
<span class="t" style="left:9px;top:23.20px;font-size:11.4px;line-height:16px;color:#000;letter-spacing:-0.344px;white-space:nowrap;">Basic</span>
<span class="t" style="left:9px;top:38.20px;font-size:11.2px;line-height:16px;color:#000;letter-spacing:-0.387px;word-spacing:0.387px;white-space:nowrap;">39.88 GB</span>
<span class="t" style="left:9px;top:53.20px;font-size:11.7px;line-height:16px;color:#000;letter-spacing:0.236px;white-space:nowrap;">Online</span>
<div style="left:105px;top:6px;width:764.5px;height:12.7px;background:#000;"></div>
<div style="left:105px;top:18.7px;width:765px;height:74.3px;background:#fff;"></div>
<div style="left:108px;top:22px;width:758px;height:1px;background:#9a9a9a;"></div>
<div style="left:108px;top:22px;width:1px;height:68px;background:#9a9a9a;"></div>
<div style="left:870px;top:6px;width:1px;height:88px;background:#a0a0a0;"></div>
<div style="left:105px;top:93px;width:766px;height:1px;background:#a0a0a0;"></div>
<span class="t" style="left:112.5px;top:39.70px;font-size:11.1px;line-height:16px;color:#000;letter-spacing:-0.400px;word-spacing:0.400px;width:755px;overflow:hidden;white-space:nowrap;">39.88 GB</span>
<span class="t" style="left:112.5px;top:54.70px;font-size:11.7px;line-height:16px;color:#000;letter-spacing:0.121px;width:755px;overflow:hidden;white-space:nowrap;">Unallocated</span>
</div>
<div style="left:197px;top:871px;width:873px;height:43px;overflow:hidden">
<div style="left:0px;top:98px;width:873px;height:1px;background:#a0a0a0;"></div>
<div style="left:103px;top:0px;width:1px;height:98px;background:#a0a0a0;"></div>
<div style="left:104px;top:0px;width:1px;height:98px;background:#fff;"></div>
<div style="left:105px;top:0px;width:596px;height:98px;background:#faf8fa;"></div>
<div style="left:701px;top:0px;width:1px;height:98px;background:#a0a0a0;"></div>
<svg style="left:11px;top:4.5px" width="16" height="16" viewBox="0 0 16 16"><g transform="translate(1,0)"><circle cx="9.500" cy="5.300" r="4.700" fill="#dcdee2" stroke="#8b9097" stroke-width=".9"/><circle cx="9.500" cy="5.300" r="1.700" fill="#fff" stroke="#8b9097" stroke-width=".7"/><path d="M1.500 9h10l1.500 2.500h-13z" fill="#c8ccd1"/><rect x="0" y="11" width="13" height="4" fill="#474d55"/><rect x="9" y="12.200" width="2.600" height="1.600" fill="#49d13d"/></g></svg>
<span class="t" style="left:27.5px;top:8.00px;font-size:11.7px;line-height:16px;color:#000;font-weight:bold;letter-spacing:0.163px;white-space:nowrap;">CD-ROM 0</span>
<span class="t" style="left:9px;top:23.20px;font-size:11.2px;line-height:16px;color:#000;letter-spacing:-0.327px;white-space:nowrap;">DVD</span>
<span class="t" style="left:9px;top:38.20px;font-size:10.9px;line-height:16px;color:#000;letter-spacing:-0.399px;word-spacing:0.399px;white-space:nowrap;">3.67 GB</span>
<span class="t" style="left:9px;top:53.20px;font-size:11.7px;line-height:16px;color:#000;letter-spacing:0.236px;white-space:nowrap;">Online</span>
<div style="left:105px;top:6px;width:591.0px;height:12.7px;background:#000086;"></div>
<div style="left:105px;top:18.7px;width:591.5px;height:74.3px;background:#fff;"></div>
<div style="left:108px;top:22px;width:584.5px;height:1px;background:#9a9a9a;"></div>
<div style="left:108px;top:22px;width:1px;height:68px;background:#9a9a9a;"></div>
<div style="left:696.5px;top:6px;width:1px;height:88px;background:#a0a0a0;"></div>
<div style="left:105px;top:93px;width:592.5px;height:1px;background:#a0a0a0;"></div>
<span class="t" style="left:112.5px;top:24.70px;font-size:11.5px;line-height:16px;color:#000;font-weight:bold;letter-spacing:-0.348px;word-spacing:0.348px;width:581.5px;overflow:hidden;white-space:nowrap;">J_CENA_X64FREV_EN-US_DV5  (X:)</span>
<span class="t" style="left:112.5px;top:39.70px;font-size:11.7px;line-height:16px;color:#000;width:581.5px;overflow:hidden;white-space:nowrap;">3.67 GB UDF</span>
<span class="t" style="left:112.5px;top:54.70px;font-size:11.7px;line-height:16px;color:#000;letter-spacing:0.147px;width:581.5px;overflow:hidden;white-space:nowrap;">Healthy (Primary Partition)</span>
</div>
<div style="left:1071px;top:371px;width:15px;height:543px;background:#f6f3f6;"></div>
<div style="left:1071px;top:388px;width:15px;height:339px;background:#cdcdcd;"></div>
<svg style="left:1071px;top:371px" width="15" height="543" viewBox="0 0 15 543"><path d="M4 11.500l3.500-3.500 3.500 3.500" stroke="#505050" stroke-width="1.600" fill="none"/><path d="M4 531.500l3.500 3.500 3.500-3.500" stroke="#505050" stroke-width="1.600" fill="none"/></svg>
<div style="left:197.5px;top:914px;width:889.5px;height:20px;background:#f6f3f6;"></div>
<div style="left:202.5px;top:918px;width:10.3px;height:12px;background:#000;"></div>
<span class="t" style="left:218px;top:915.90px;font-size:11.7px;line-height:16px;color:#000;letter-spacing:0.121px;">Unallocated</span>
<div style="left:287px;top:918px;width:10.3px;height:12px;background:#000086;"></div>
<span class="t" style="left:302px;top:915.90px;font-size:11.7px;line-height:16px;color:#000;letter-spacing:0.270px;">Primary partition</span>
<div style="left:196px;top:933.2px;width:891px;height:1px;background:#909090;"></div>
<div style="left:1086px;top:914px;width:1px;height:20px;background:#a0a0a0;"></div>
<div style="left:1087.5px;top:114px;width:5px;height:821px;background:#fafafa;"></div>
<div style="left:1092.5px;top:114px;width:188.5px;height:821px;background:#fff;"></div>
<div style="left:1092.5px;top:114px;width:188.5px;height:1.5px;background:#777;"></div>
<div style="left:1092.5px;top:114px;width:1.5px;height:821px;background:#777;"></div>
<div style="left:1094.0px;top:115.5px;width:187.0px;height:21px;background:#f6f3f6;"></div>
<div style="left:1094.0px;top:136px;width:187.0px;height:1px;background:#a0a0a0;"></div>
<div style="left:1094.0px;top:138px;width:185.5px;height:24.5px;background:linear-gradient(#bdd4ec,#9db8d8);"></div>
<span class="t" style="left:1099.5px;top:118.90px;font-size:11.6px;line-height:16px;color:#000;font-weight:bold;letter-spacing:-0.341px;">Actions</span>
<span class="t" style="left:1101.5px;top:142.60px;font-size:11.7px;line-height:16px;color:#000;letter-spacing:0.050px;">Disk Management</span>
<span class="t" style="left:1125.5px;top:166.60px;font-size:11.7px;line-height:16px;color:#000;letter-spacing:0.214px;">More Actions</span>
<svg style="left:1262px;top:146px" width="12" height="8" viewBox="0 0 12 8"><path d="M0.500 6.500h10l-5-5z" fill="#000"/></svg>
<svg style="left:1266px;top:169px" width="8" height="12" viewBox="0 0 8 12"><path d="M1 1v9.500l5-4.750z" fill="#000"/></svg>
<div style="left:1px;top:935.5px;width:1281px;height:1px;background:#fff;"></div>
<div style="left:1px;top:936.5px;width:1278px;height:22.5px;background:#f6f3f6;"></div>
<div style="left:1061px;top:938px;width:1px;height:20px;background:#d7d7d7;"></div>
<div style="left:1194px;top:938px;width:1px;height:20px;background:#d7d7d7;"></div>
<div style="left:2px;top:959px;width:1280px;height:39.5px;background:#0b121b;"></div>
<div style="left:295.5px;top:959px;width:48.5px;height:38px;background:#3b4046;"></div>
<div style="left:295.5px;top:996.5px;width:48.5px;height:2px;background:#8ab4d6;"></div>
<div style="left:251px;top:996.5px;width:40.5px;height:2px;background:#8ab4d6;"></div>
<div style="left:1277px;top:959px;width:1px;height:39.5px;background:#5a6068;"></div>
<svg style="left:0px;top:959px" width="1286" height="40" viewBox="0 0 1286 40"><path d="M18 14l6.500-1v6.700h-6.500zM25.500 12.800l9-1.300v8.200h-9zM18 20.700h6.500v6.700l-6.500-1zM25.500 20.700h9v8.200l-9-1.300z" fill="#fff"/><circle cx="76.500" cy="17.300" r="5" fill="none" stroke="#fff" stroke-width="1.400"/><path d="M73 21l-7 7" stroke="#fff" stroke-width="1.400"/><rect x="116.700" y="13" width="11" height="13" fill="none" stroke="#fff" stroke-width="1.300"/><path d="M114.500 15h-2v9h2M130 15h2v9h-2" fill="none" stroke="#fff" stroke-width="1.300"/><path d="M211.500 12h6.500l1.500 1.800h13v13.500h-21z" fill="#ffe08f"/><path d="M211.500 15h21v2h-21z" fill="#f6cf6c"/><path d="M215 28.500v-6.500h13.500v6.500h-3v-3.500h-7.500v3.500z" fill="#3ea6dd"/><path d="M211.500 27.300h3.500v1.200h-3.500zM228.500 27.300h4v1.200h-4z" fill="#e8c25a"/><rect x="259.500" y="8.500" width="11" height="21" fill="#2f8fdb" stroke="#bfe0f7" stroke-width="1"/><path d="M259.500 14h11" stroke="#bfe0f7" stroke-width="1"/><path d="M268 21.500v-2h6v2" fill="none" stroke="#e8edf2" stroke-width="1.200"/><rect x="263.500" y="21.500" width="19.500" height="10.500" rx="1.500" fill="#7894a8" stroke="#e8edf2" stroke-width="1"/><path d="M266 25h14.500" stroke="#e8edf2" stroke-width="1"/><path d="M309 22l5-8 9 1-2 9z" fill="#c9ced4"/><path d="M317 9.500l13 2.500-2.500 12-10-2.500z" fill="#cfd8ee" stroke="#a9b4cf" stroke-width=".8"/><path d="M318.500 11l10 2-2 9.500-7.500-2z" fill="#2141c8"/><path d="M320 19l3-8 3 9.500z" fill="#0b1c86"/><path d="M308.500 22.500l13 2.500 3-1.500v5l-3 2.500-13-3z" fill="#d3d7dc" stroke="#9aa0a8" stroke-width=".6"/><path d="M311 25.500l2 .4M315 26.300l2 .4" stroke="#555" stroke-width="1.300"/><rect x="1221.500" y="14.500" width="15" height="9.500" fill="none" stroke="#fff" stroke-width="1.100"/><rect x="1221.500" y="14.500" width="4.500" height="5.500" fill="#0b121b" stroke="#fff" stroke-width="1.100"/><path d="M1223.700 20v7M1229.700 24v2.500M1226 26.700h7.500" stroke="#fff" stroke-width="1.100" fill="none"/><path d="M1222.800 16.500l1 1 1-1" stroke="#fff" stroke-width=".8" fill="none"/></svg><svg style="left:157.8px;top:962.4px" width="28.7" height="28.7" viewBox="0 0 24 24"><defs><linearGradient id="ieg157" x1="0" y1="0" x2="0" y2="1"><stop offset="0" stop-color="#86d3f6"/><stop offset=".55" stop-color="#58bdee"/><stop offset="1" stop-color="#2f97d8"/></linearGradient><linearGradient id="ier157" x1="0" y1="1" x2="1" y2="0"><stop offset="0" stop-color="#e7c83c"/><stop offset=".5" stop-color="#f3d864"/><stop offset="1" stop-color="#d9a92a"/></linearGradient></defs><text x="13.700" y="22.900" text-anchor="middle" font-family="Liberation Sans, sans-serif" font-weight="bold" font-size="30.500" fill="url(#ieg157)" stroke="#2a8fd2" stroke-width=".5">e</text><path d="M8.200 23.300C5.700 24 3.300 22.600 4 19.700 4.700 15.200 8.500 9.800 14 6.200 16.800 4.500 21 3.800 21.600 6.200 21.800 7.200 21.500 7.900 21.300 8.300" stroke="url(#ier157)" stroke-width="1.6" fill="none" stroke-linecap="round"/></svg>
<span class="t" style="left:1248px;top:970.60px;font-size:10.9px;line-height:16px;color:#fff;letter-spacing:-0.815px;">ENG</span>
<div style="left:0;top:0;width:0;height:0">
<div style="left:220px;top:132px;width:499px;height:409px;background:#f6f3f6;box-sizing:border-box;border:1px solid #4494b5;"></div>
<div style="left:221px;top:133px;width:497px;height:88px;background:#fff;"></div>
<div style="left:221px;top:221px;width:497px;height:1px;background:#a0a0a0;"></div>
<div style="left:221px;top:493px;width:497px;height:1px;background:#a0a0a0;"></div>
<div style="left:221px;top:494px;width:497px;height:1px;background:#fff;"></div>
<span class="t" style="left:229.5px;top:139.60px;font-size:11.7px;line-height:16px;color:#000;letter-spacing:-0.057px;word-spacing:0.057px;">New RAID-5 Volume</span>
<svg style="left:696px;top:141px" width="14" height="14" viewBox="0 0 14 14"><path d="M2 1.500l10 10M12 1.500l-10 10" stroke="#000" stroke-width="1.100" fill="none"/></svg>
<span class="t" style="left:243.5px;top:172.00px;font-size:12.01px;line-height:16px;color:#000;font-weight:bold;letter-spacing:-0.022px;word-spacing:0.022px;">Select Disks</span>
<span class="t" style="left:265px;top:186.60px;font-size:11px;line-height:16px;color:#000;letter-spacing:-0.190px;word-spacing:0.190px;">You can select the disks and set the disk size for this volume.</span>
<span class="t" style="left:264px;top:233.10px;font-size:11px;line-height:16px;color:#000;letter-spacing:-0.122px;word-spacing:0.122px;">Select the disks you want to use, and then click Add.</span>
<span class="t" style="left:264px;top:275.00px;font-size:11px;line-height:16px;color:#000;letter-spacing:-0.222px;">A<u>v</u>ailable:</span>
<span class="t" style="left:532px;top:275.00px;font-size:11px;line-height:16px;color:#000;letter-spacing:-0.172px;"><u>S</u>elected:</span>
<div style="left:264px;top:294px;width:144px;height:96px;background:#fff;box-sizing:border-box;border:1px solid #828790;"></div>
<div style="left:532px;top:294px;width:144px;height:96px;background:#fff;box-sizing:border-box;border:1px solid #828790;"></div>
<div style="left:533.5px;top:295.5px;width:141px;height:16px;background:#116fcf;box-sizing:border-box;border:1px dotted rgba(255,215,170,.55);"></div>
<span class="t" style="left:534.5px;top:294.70px;font-size:11px;line-height:16px;color:#fff;letter-spacing:-0.391px;word-spacing:0.391px;">Disk 1</span>
<span class="t" style="left:582px;top:294.70px;font-size:11px;line-height:16px;color:#fff;letter-spacing:-0.276px;word-spacing:0.276px;">40830 MB</span>
<span class="t" style="left:534.5px;top:310.70px;font-size:11px;line-height:16px;color:#000;letter-spacing:-0.391px;word-spacing:0.391px;">Disk 3</span>
<span class="t" style="left:582px;top:310.70px;font-size:11px;line-height:16px;color:#000;letter-spacing:-0.276px;word-spacing:0.276px;">40830 MB</span>
<span class="t" style="left:534.5px;top:326.70px;font-size:11px;line-height:16px;color:#000;letter-spacing:-0.391px;word-spacing:0.391px;">Disk 4</span>
<span class="t" style="left:582px;top:326.70px;font-size:11px;line-height:16px;color:#000;letter-spacing:-0.276px;word-spacing:0.276px;">40830 MB</span>
<div style="left:422px;top:300px;width:93px;height:21px;background:#cccccc;box-sizing:border-box;border:1px solid #bfbfbf;"></div>
<div style="left:422px;top:329px;width:93px;height:21px;background:#e1e1e1;box-sizing:border-box;border:1px solid #adadad;"></div>
<div style="left:422px;top:358px;width:93px;height:21px;background:#e1e1e1;box-sizing:border-box;border:1px solid #adadad;"></div>
<span class="t" style="left:455px;top:302.70px;font-size:11px;line-height:16px;color:#838383;letter-spacing:-0.688px;word-spacing:0.688px;"><u>A</u>dd &gt;</span>
<span class="t" style="left:442.5px;top:331.90px;font-size:11px;line-height:16px;color:#000;letter-spacing:-0.367px;word-spacing:0.367px;">&lt; <u>R</u>emove</span>
<span class="t" style="left:437.5px;top:360.90px;font-size:11px;line-height:16px;color:#000;letter-spacing:-0.292px;word-spacing:0.292px;">&lt; Re<u>m</u>ove All</span>
<span class="t" style="left:262px;top:405.30px;font-size:11px;line-height:16px;color:#000;letter-spacing:-0.277px;word-spacing:0.277px;">Total volume size in megabytes (MB):</span>
<span class="t" style="left:262px;top:428.80px;font-size:11px;line-height:16px;color:#000;letter-spacing:-0.272px;word-spacing:0.272px;">Maximum available space in MB:</span>
<span class="t" style="left:262px;top:451.80px;font-size:11px;line-height:16px;color:#000;letter-spacing:-0.194px;word-spacing:0.194px;">S<u>e</u>lect the amount of space in MB:</span>
<div style="left:532px;top:406px;width:144px;height:15px;background:#f6f3f6;box-sizing:border-box;border-top:1px solid #a0a0a0;border-left:1px solid #a0a0a0;border-bottom:1px solid #fff;border-right:1px solid #fff;"></div>
<div style="left:532px;top:429px;width:144px;height:15px;background:#f6f3f6;box-sizing:border-box;border-top:1px solid #a0a0a0;border-left:1px solid #a0a0a0;border-bottom:1px solid #fff;border-right:1px solid #fff;"></div>
<span class="t" style="left:533.5px;top:405.50px;font-size:11px;line-height:16px;color:#000;letter-spacing:-0.148px;">81660</span>
<span class="t" style="left:533.5px;top:428.80px;font-size:11px;line-height:16px;color:#000;letter-spacing:-0.148px;">40830</span>
<div style="left:532px;top:450px;width:144px;height:23px;background:#fff;box-sizing:border-box;border:1px solid #7a7a7a;"></div>
<span class="t" style="left:535.5px;top:451.80px;font-size:11px;line-height:16px;color:#000;letter-spacing:-0.148px;">40830</span>
<div style="left:659px;top:452px;width:15px;height:9.5px;background:#f6f3f6;box-sizing:border-box;border:1px solid #adadad;"></div>
<div style="left:659px;top:461.5px;width:15px;height:9.5px;background:#f6f3f6;box-sizing:border-box;border:1px solid #adadad;"></div>
<svg style="left:659px;top:452px" width="15" height="19" viewBox="0 0 15 19"><path d="M4.500 6.500h6l-3-3zM4.500 12.500h6l-3 3z" fill="#000"/></svg>
<div style="left:474px;top:508px;width:73px;height:21px;background:#e1e1e1;box-sizing:border-box;border:1px solid #adadad;"></div>
<div style="left:549px;top:508px;width:73px;height:21px;background:#e6ebf1;box-sizing:border-box;border:2px solid #1672c4;"></div>
<div style="left:634px;top:508px;width:73px;height:21px;background:#e1e1e1;box-sizing:border-box;border:1px solid #adadad;"></div>
<span class="t" style="left:492.5px;top:511.20px;font-size:11px;line-height:16px;color:#000;letter-spacing:-0.109px;word-spacing:0.109px;">&lt; <u>B</u>ack</span>
<span class="t" style="left:570px;top:511.20px;font-size:11px;line-height:16px;color:#000;letter-spacing:-0.277px;word-spacing:0.277px;"><u>N</u>ext &gt;</span>
<span class="t" style="left:653px;top:511.20px;font-size:11px;line-height:16px;color:#000;letter-spacing:-0.150px;">Cancel</span>
</div>
</body></html>
